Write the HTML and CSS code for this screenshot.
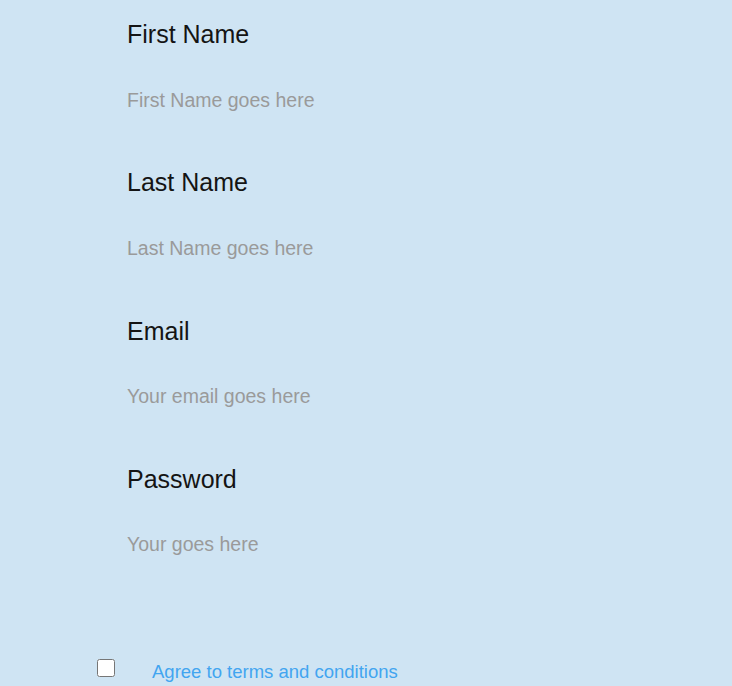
FILE: index.html
```html
<!DOCTYPE html>
<html>
<head>
<meta charset="utf-8">
<link rel="stylesheet" href="styles.css">
</head>
<body>
<form class="form">
  <div class="field">
    <label class="label" for="fn">First Name</label>
    <input class="input" id="fn" type="text" placeholder="First Name goes here">
  </div>
  <div class="field">
    <label class="label" for="ln">Last Name</label>
    <input class="input" id="ln" type="text" placeholder="Last Name goes here">
  </div>
  <div class="field">
    <label class="label" for="em">Email</label>
    <input class="input" id="em" type="email" placeholder="Your email goes here">
  </div>
  <div class="field">
    <label class="label" for="pw">Password</label>
    <input class="input" id="pw" type="password" placeholder="Your goes here">
  </div>
  <div class="terms">
    <input class="check" type="checkbox" id="agree">
    <a class="terms-link" href="#">Agree to terms and conditions</a>
  </div>
</form>
</body>
</html>
```
FILE: styles.css
```css
html, body {
  margin: 0;
  padding: 0;
  background: #cfe4f3;
  font-family: "Liberation Sans", Arial, sans-serif;
}
.form {
  padding-top: 19px;
}
.field {
  display: flex;
  flex-direction: column;
  padding-left: 127px;
  margin-bottom: 47.3px;
}
.label {
  font-size: 25px;
  line-height: 30px;
  color: #141414;
}
.input {
  margin-top: 31px;
  height: 40px;
  width: 400px;
  padding: 0;
  border: none;
  outline: none;
  background: transparent;
  font-family: "Liberation Sans", Arial, sans-serif;
  font-size: 19.5px;
  color: #333;
}
.input::placeholder {
  color: #9a9a9a;
}
.terms {
  display: flex;
  align-items: center;
  padding-left: 97px;
  margin-top: 89px;
  gap: 37px;
}
.check {
  width: 18px;
  height: 18px;
  margin: 0;
}
.terms-link {
  font-size: 18.5px;
  line-height: 22px;
  color: #42a5f0;
  text-decoration: none;
  padding-top: 7px;
}
```
